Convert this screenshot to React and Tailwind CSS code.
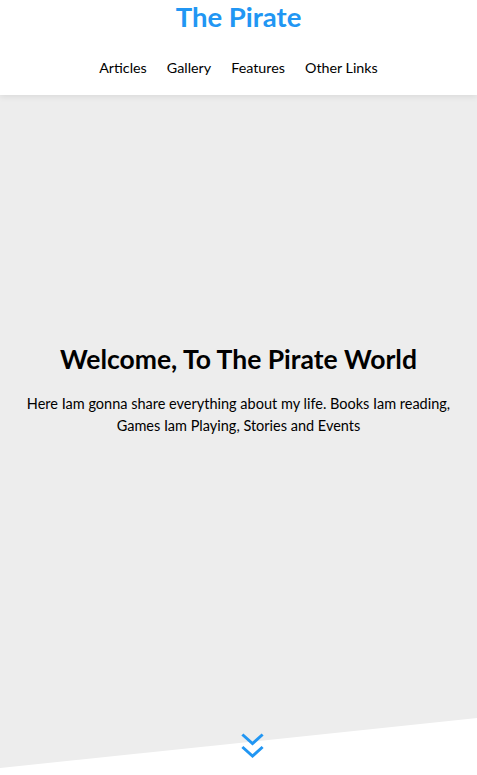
import React from 'react';

const links = ['Articles', 'Gallery', 'Features', 'Other Links'];

const App = () => {
  return (
    <div className="min-h-screen bg-white text-black" style={{ fontFamily: 'Lato, "Open Sans", sans-serif' }}>
      <header className="relative z-10 bg-white shadow-[0_2px_6px_rgba(0,0,0,0.08)] h-[95px] flex flex-col items-center">
        <h1 className="text-[27.5px] font-bold text-[#2196f3] leading-none mt-[3px]">The Pirate</h1>
        <nav className="flex gap-5 mt-[26px] text-[14.3px]">
          {links.map(l => (
            <a key={l} href="#" className="text-black">{l}</a>
          ))}
        </nav>
      </header>

      <section className="relative h-[680px] bg-[#ededed] flex flex-col items-center justify-center text-center px-6">
        <div className="-mt-[90px]">
          <h2 className="text-[26.5px] font-bold leading-tight">Welcome, To The Pirate World</h2>
          <p className="mt-[16px] text-[14.5px] leading-[22px]">
            Here Iam gonna share everything about my life. Books Iam reading, Games Iam Playing, Stories and Events
          </p>
        </div>
        <svg className="absolute left-0 bottom-0 w-full h-[57px]" viewBox="0 0 477 57" preserveAspectRatio="none">
          <polygon points="0,57 0,50 477,0 477,57" fill="#ffffff" />
        </svg>
        <svg className="absolute left-[241px] top-[638px] w-[23px] h-[27px]" viewBox="0 0 23 27" fill="none" stroke="#2196f3" strokeWidth="3" strokeLinecap="square">
          <path d="M2.5 2.5 L11.5 10.5 L20.5 2.5" />
          <path d="M2.5 15 L11.5 23 L20.5 15" />
        </svg>
      </section>
    </div>
  );
};

export default App;
